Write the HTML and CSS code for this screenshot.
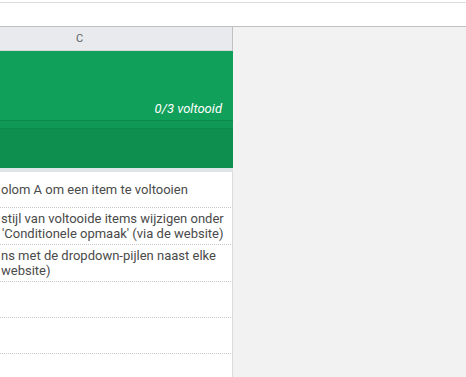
FILE: index.html
```html
<!DOCTYPE html>
<html lang="nl">
<head>
    <meta charset="UTF-8">
    <meta name="viewport" content="width=device-width, initial-scale=1.0">
    <title>Takenlijst</title>
    <link rel="stylesheet" href="styles.css">
</head>
<body>
    <div class="formula-bar"></div>

    <div class="sheet">
        <div class="column">
            <div class="col-header">C</div>

            <div class="title-block">
                <span class="progress">0/3 voltooid</span>
            </div>
            <div class="title-strip"></div>
            <div class="sub-header"></div>
            <div class="freeze-line"></div>

            <div class="row">
                <div class="cell-text">olom A om een item te voltooien</div>
            </div>
            <div class="row tall">
                <div class="cell-text">stijl van voltooide items wijzigen onder<br><span class="quote">'Conditionele opmaak' (via de website)</span></div>
            </div>
            <div class="row tall">
                <div class="cell-text">ns met de dropdown-pijlen naast elke<br>website)</div>
            </div>
            <div class="row"></div>
            <div class="row"></div>
            <div class="row last"></div>
        </div>

        <div class="side"></div>
    </div>
</body>
</html>
```

FILE: styles.css
```css
body {
    margin: 0;
    font-family: Roboto, 'Noto Sans', Arial, sans-serif;
    background: #ffffff;
    overflow: hidden;
}

.formula-bar {
    margin-top: 2px;
    height: 23px;
    border-top: 1px solid #dadce0;
    border-bottom: 1px solid #c0c0c0;
    background: #ffffff;
}

.sheet {
    display: flex;
    height: 350px;
}

.column {
    width: 233px;
    flex-shrink: 0;
    overflow: hidden;
}

.col-header {
    height: 23px;
    line-height: 23px;
    padding-left: 76px;
    background: #e8eaed;
    border-right: 1px solid #c0c0c0;
    border-bottom: 1px solid #d4d6da;
    color: #5f6368;
    font-size: 11px;
}

.title-block {
    height: 69px;
    background: #11a05a;
    display: flex;
    align-items: flex-end;
    justify-content: flex-end;
    padding-right: 11px;
    box-sizing: border-box;
    padding-bottom: 2px;
}

.progress {
    color: #ffffff;
    font-style: italic;
    font-size: 13px;
    line-height: 18px;
}

.title-strip {
    height: 7px;
    background: #0f9856;
    border-top: 1px solid #0c8a4c;
    border-bottom: 1px solid #0c8a4c;
}

.sub-header {
    height: 39px;
    background: #0f8f4f;
}

.freeze-line {
    height: 3px;
    border-top: 1px dotted #d8e6dd;
    background: #dfe3ea;
}

.row {
    height: 35px;
    display: flex;
    align-items: center;
    padding-left: 1px;
    border-bottom: 1px dotted #c9c9c9;
    border-right: 1px solid #dcdcdc;
    color: #4a4a4a;
    font-size: 13px;
    line-height: 15px;
    white-space: nowrap;
}

.row.tall {
    height: 36px;
}

.quote {
    margin-left: 1px;
}

.row.last {
    border-bottom: none;
}

.side {
    flex: 1;
    background: #f2f2f2;
}
```
